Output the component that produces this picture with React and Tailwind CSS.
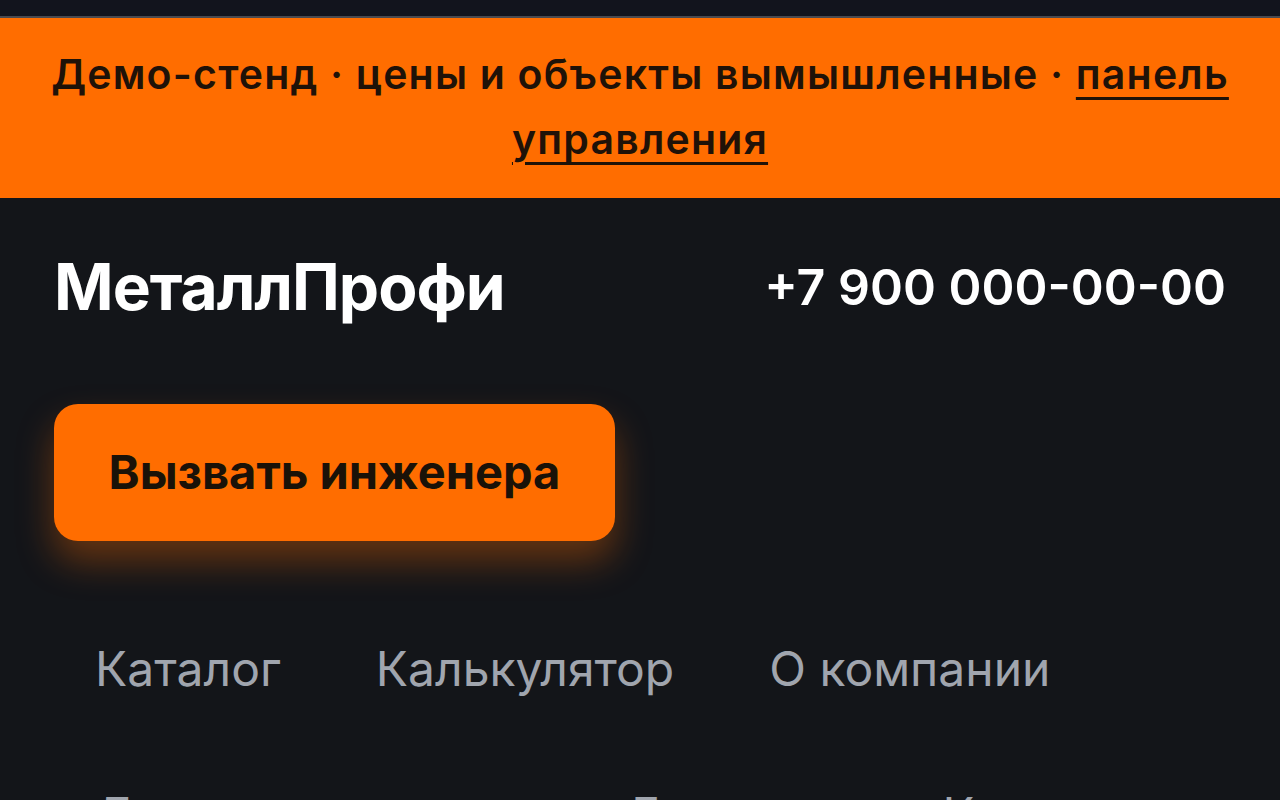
import React from 'react'

const NAV = ['Каталог', 'Калькулятор', 'О компании', 'Доставка и оплата', 'Гарантии', 'Контакты']

export default function App() {
  return (
    <div className="min-h-screen bg-[#131519] overflow-hidden" style={{ fontFamily: 'Inter, "Noto Sans", sans-serif' }}>
      {/* browser strip */}
      <div className="h-[18px] bg-[#12141d] border-b-2 border-[#4a4a4f]" />

      {/* demo banner */}
      <div className="bg-[#ff6d00] px-[24px] pt-[24px] pb-[26px] text-center text-[41px] leading-[65px] font-semibold tracking-[1.2px] text-[#1f1208]">
        Демо-стенд · цены и объекты вымышленные ·{' '}
        <a href="#" className="underline decoration-[3px] underline-offset-[8px]">панель управления</a>
      </div>

      <header className="px-[54px]">
        <div className="flex items-center justify-between pt-[58px]">
          <div className="text-[64px] leading-[62px] font-bold text-white tracking-[-1px]">МеталлПрофи</div>
          <div className="text-[50px] leading-[62px] font-semibold text-white">+7 900 000-00-00</div>
        </div>

        <button className="mt-[86px] w-[561px] h-[137px] rounded-[24px] bg-[#ff6d00] text-[47px] font-bold text-[#1a1208] shadow-[0_20px_36px_rgba(255,109,0,0.35)]">
          Вызвать инженера
        </button>

        <nav className="mt-[70px] flex flex-wrap gap-x-[13px] gap-y-[30px]">
          {NAV.map(n => (
            <a key={n} href="#" className="px-[41px] py-[28px] text-[48px] leading-[60px] text-[#a0a5ae]">{n}</a>
          ))}
        </nav>
      </header>
    </div>
  )
}
